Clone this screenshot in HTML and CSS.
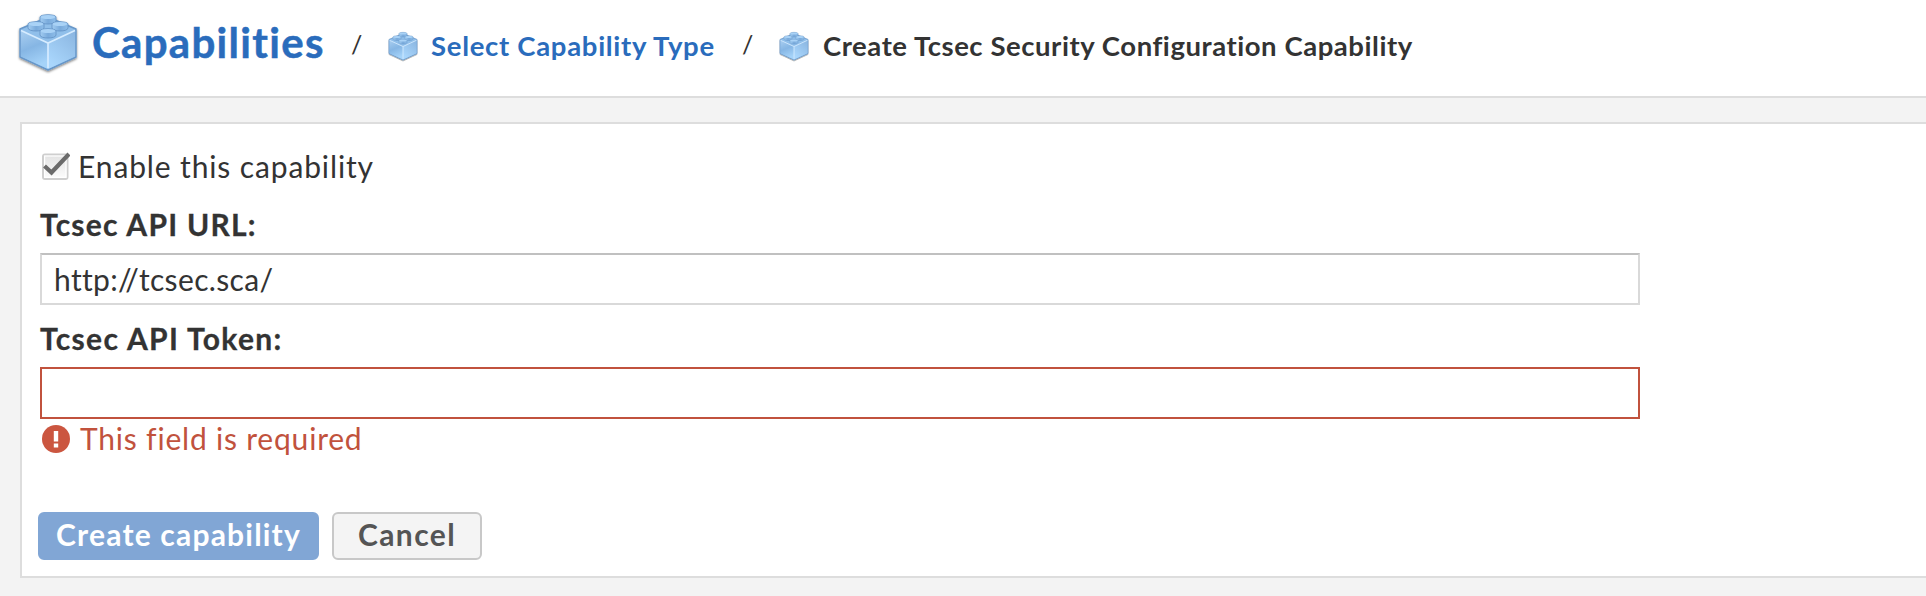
FILE: index.html
```
<!DOCTYPE html>
<html lang="en">
<head>
<meta charset="utf-8">
<title>Capabilities</title>
<link rel="stylesheet" href="styles.css">
</head>
<body>
<svg class="defs" width="0" height="0" aria-hidden="true">
  <defs>
    <linearGradient id="left" x1="0" y1="0" x2=".3" y2="1"><stop offset="0" stop-color="#a9cef0"/><stop offset=".5" stop-color="#86b6e4"/><stop offset="1" stop-color="#a5d3f9"/></linearGradient>
    <linearGradient id="right" x1="1" y1="0" x2=".4" y2="1"><stop offset="0" stop-color="#8ab5e0"/><stop offset="1" stop-color="#a9d6fc"/></linearGradient>
    <linearGradient id="stud" x1="0" y1="0" x2="1" y2="0"><stop offset="0" stop-color="#a3cdf2"/><stop offset=".5" stop-color="#79aadb"/><stop offset="1" stop-color="#8ebde9"/></linearGradient>
    <filter id="shade" x="-20%" y="-20%" width="140%" height="140%"><feDropShadow dx="0" dy="1.3" stdDeviation="1.3" flood-color="#000" flood-opacity=".5"/></filter>
    <symbol id="brick" viewBox="0 0 64 64">
      <g filter="url(#shade)">
        <path d="M4 20 32 8 60 20V48L32 61 4 48Z" fill="#8cbae6" stroke="#6797c9" stroke-width="1.4" stroke-linejoin="round" transform="translate(0 -1)"/>
        <path d="M5 21 32 33V59L5 46.5Z" fill="url(#left)"/>
        <path d="M59 21 32 33V59L59 46.5Z" fill="url(#right)"/>
        <path d="M5 20 32 9 59 20 32 32Z" fill="#90bfea"/>
        <path d="M5 20.5 32 33 59 20.5M32 33V58" fill="none" stroke="#d6ecff" stroke-width="1.7"/>
        <g fill="url(#stud)" stroke="#6695c7" stroke-width=".9">
          <path d="M24 7V11C24 15 40 15 40 11V7C40 4 24 4 24 7Z"/>
          <path d="M12 14V18C12 22 28 22 28 18V14C28 11 12 11 12 14Z"/>
          <path d="M36 14V18C36 22 52 22 52 18V14C52 11 36 11 36 14Z"/>
          <path d="M24 21V25C24 29 40 29 40 25V21C40 18 24 18 24 21Z"/>
        </g>
        <g fill="#a9d2f6">
          <ellipse cx="32" cy="7" rx="7.3" ry="2"/><ellipse cx="20" cy="14" rx="7.3" ry="2"/><ellipse cx="44" cy="14" rx="7.3" ry="2"/><ellipse cx="32" cy="21" rx="7.3" ry="2"/>
        </g>
      </g>
    </symbol>
    <linearGradient id="box" x1="0" y1="0" x2="0" y2="1"><stop offset="0" stop-color="#e2e2e2"/><stop offset="1" stop-color="#fdfdfd"/></linearGradient>
  </defs>
</svg>
<header class="crumbs">
  <svg class="brick-lg"><use href="#brick"/></svg>
  <a class="title">Capabilities</a>
  <span class="slash">/</span>
  <svg class="brick-sm"><use href="#brick"/></svg>
  <a class="crumb select">Select Capability Type</a>
  <span class="slash">/</span>
  <svg class="brick-sm"><use href="#brick"/></svg>
  <span class="crumb current">Create Tcsec Security Configuration Capability</span>
</header>
<main class="panel">
  <label class="check">
    <svg class="checkbox" viewBox="0 0 28 28"><rect x="1" y="2.5" width="24.5" height="24.5" rx="2" fill="url(#box)" stroke="#cfcfcf" stroke-width="2"/><rect x="2.6" y="4" width="21.4" height="21.4" fill="none" stroke="#fff" stroke-width="1.2"/><path d="M2.5 14 9.5 20.5 27 2" fill="none" stroke="#6b6b6b" stroke-width="4.2"/></svg>
    <span class="enable">Enable this capability</span>
  </label>
  <label class="label url-label">Tcsec API URL:</label>
  <div class="input">http://tcsec.sca/</div>
  <label class="label token-label">Tcsec API Token:</label>
  <div class="input invalid"></div>
  <div class="error">
    <svg class="alert" viewBox="0 0 28 28"><circle cx="14" cy="14" r="14" fill="#cb5640"/><path d="M11.8 6h4.4v10.5h-4.4zM11.8 18.4h4.4v4h-4.4z" fill="#fff"/></svg>
    <span>This field is required</span>
  </div>
  <div class="actions">
    <button class="btn primary">Create capability</button>
    <button class="btn cancel">Cancel</button>
  </div>
</main>
</body>
</html>
```
FILE: styles.css
```
* { box-sizing: border-box; }
body { margin: 0; background: #f3f3f3; color: #333; font-family: Lato, "Open Sans", sans-serif; font-size: 30px; overflow: hidden; height: 596px; white-space: nowrap; font-variant-ligatures: none; }
.defs { display: block; height: 0; }
.crumbs { display: flex; height: 98px; background: #fff; border-bottom: 2px solid #ddd; }
.crumbs > * { flex: none; }
.brick-lg { width: 64px; height: 64px; margin: 10px 0 0 16px; }
.brick-sm { width: 32px; height: 32px; margin-top: 30px; }
.title { width: 233px; margin: 16px 0 0 12px; font-size: 42px; line-height: 52px; font-weight: 700; letter-spacing: 1.3px; color: #2a6cbc; -webkit-text-stroke: .5px; }
.slash { font-size: 25px; line-height: 36px; margin: 26px 0 0 26px; width: 36px; font-weight: 400; }
.crumb { margin: 28px 0 0 12px; font-size: 27.5px; line-height: 36px; font-weight: 700; }
.select { width: 285px; letter-spacing: .7px; color: #2a6cbc; }
.current { margin-left: 13px; letter-spacing: .55px; }
.panel { margin: 24px 0 0 20px; width: 1940px; height: 456px; border: 2px solid #ddd; background: #fff; padding: 26px 16px 0 18px; display: flex; flex-direction: column; align-items: flex-start; }
.check { display: flex; height: 36px; gap: 8px; line-height: 33px; letter-spacing: .87px; }
.checkbox { width: 28px; height: 28px; margin: 2px 0 0 2px; }
.label { height: 36px; line-height: 34px; font-weight: 700; -webkit-text-stroke: .3px; }
.url-label { margin-top: 21px; letter-spacing: 1.25px; }
.token-label { margin-top: 16px; letter-spacing: 1.35px; }
.input { width: 1600px; height: 52px; border: 2px solid #d9d9d9; border-top-color: #c0c0c0; margin-top: 10px; padding-left: 12px; line-height: 48px; letter-spacing: .35px; }
.invalid { border-color: #c1523d; }
.error { display: flex; gap: 10px; height: 38px; margin-top: 2px; line-height: 34px; letter-spacing: .8px; color: #c1523d; }
.alert { width: 28px; height: 28px; margin: 4px 0 0 2px; }
.actions { display: flex; gap: 13px; margin: 53px 0 0 -2px; }
.btn { height: 48px; width: 150px; padding: 0 0 4px; border: 2px solid #c8c8c8; border-radius: 6px; background: #f4f4f4; color: #555; font: 700 30px/40px Lato, sans-serif; font-variant-ligatures: none; letter-spacing: 1.4px; }
.primary { width: 281px; border-color: #81a6d5; background: #81a6d5; color: #fff; letter-spacing: 1.2px; }
```
